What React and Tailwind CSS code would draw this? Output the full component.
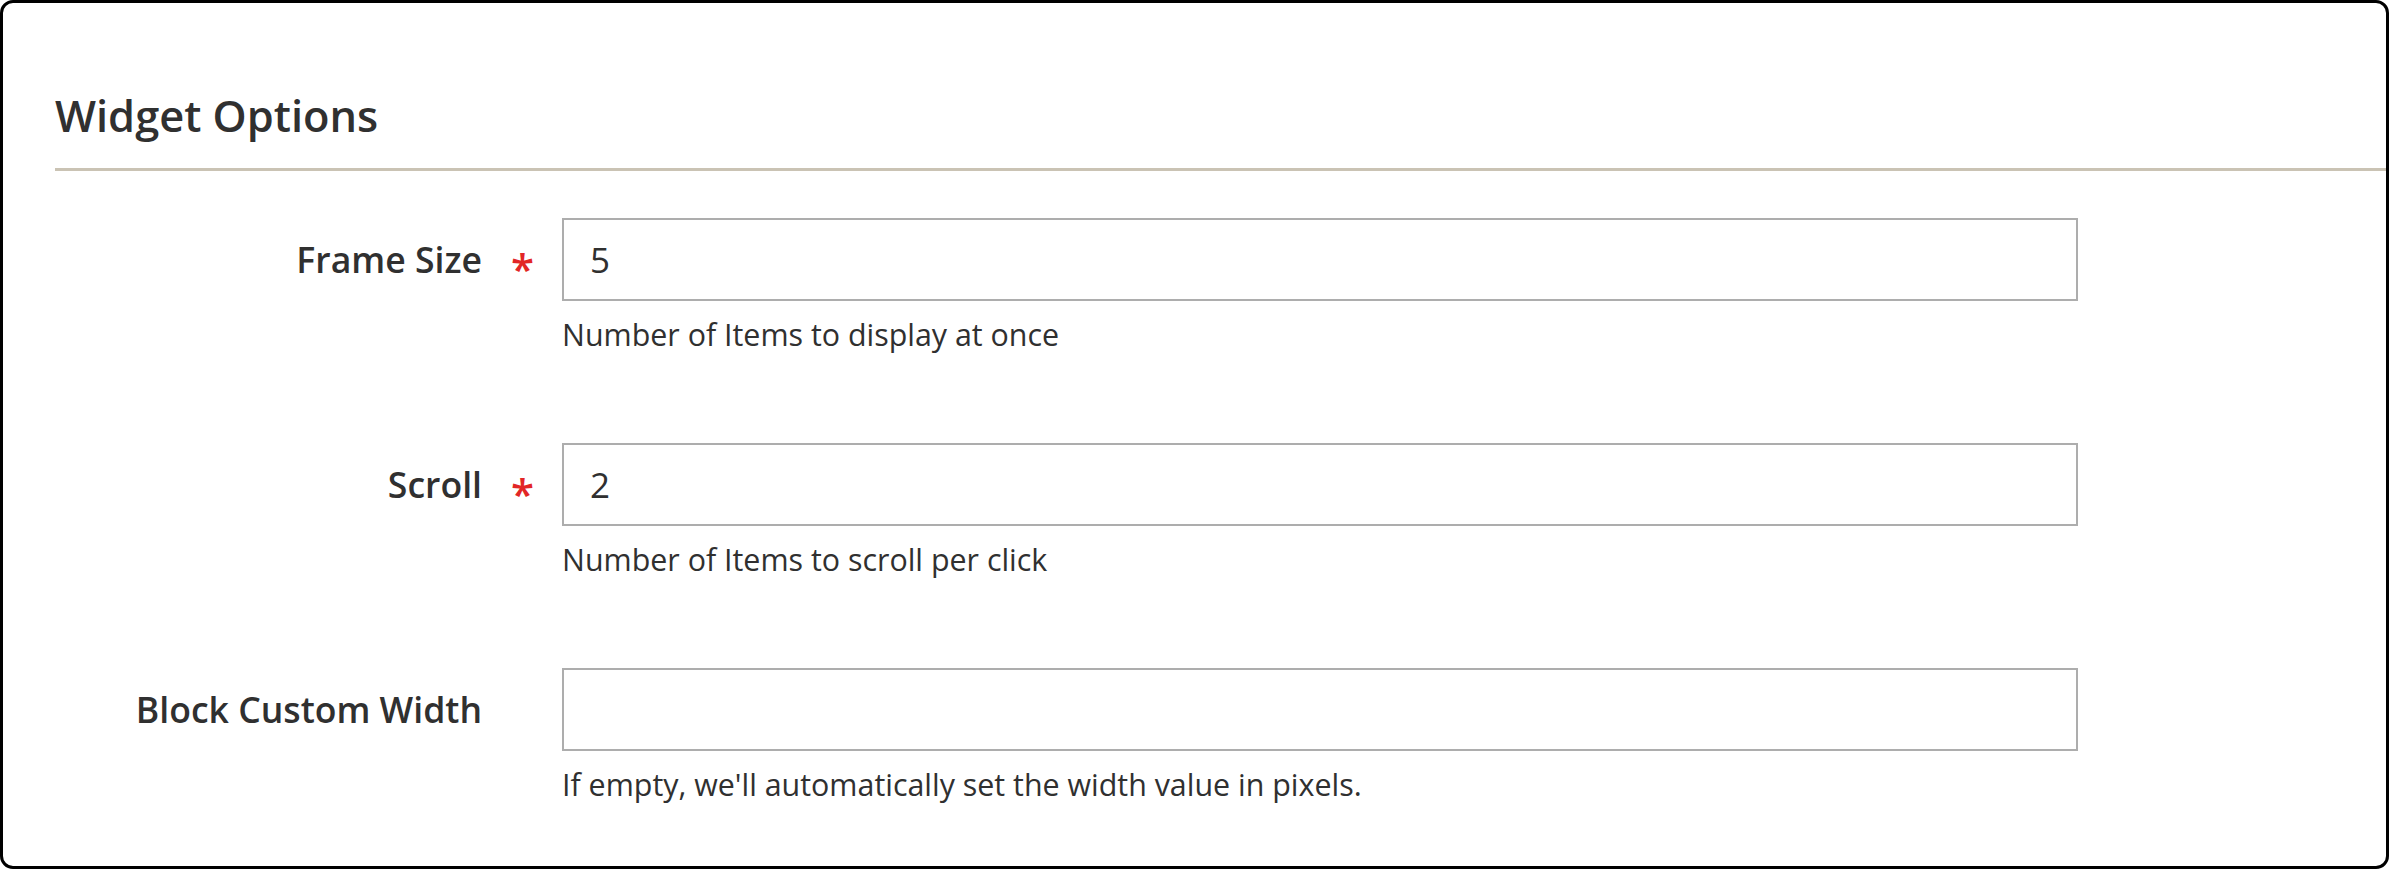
import React from "react";

function Row({ label, required, value, note, first }) {
  return (
    <div className={`flex items-start ${first ? "mt-[47px]" : "mt-[86px]"}`}>
      <div className="w-[479px] h-[83px] flex items-center justify-end text-[35.6px] font-semibold text-[#303030] leading-none">
        {label}
      </div>
      <div className="w-[80px] h-[83px] flex items-center pl-[29px]">
        {required && (
          <span className="text-[#e22626] text-[42px] font-semibold leading-none translate-y-[8px]">*</span>
        )}
      </div>
      <div className="w-[1516px]">
        <div className="h-[83px] border-2 border-[#adadad] bg-white flex items-center px-[26px] text-[35px] text-[#303030] leading-none">
          {value}
        </div>
        <div className="mt-[11px] text-[30.4px] leading-[45px] text-[#303030]">{note}</div>
      </div>
    </div>
  );
}

export default function App() {
  return (
    <div className="w-[2389px] h-[869px] bg-white font-['Open_Sans',sans-serif]">
      <div className="h-full border-[3px] border-black rounded-[13px] overflow-hidden">
        <h2 className="pt-[91px] pl-[52px] text-[43.4px] leading-[43px] font-semibold text-[#303030]">
          Widget Options
        </h2>
        <div className="mt-[31px] ml-[52px] h-[3px] bg-[#cac3b4]" />
        <Row first label="Frame Size" required value="5" note="Number of Items to display at once" />
        <Row label="Scroll" required value="2" note="Number of Items to scroll per click" />
        <Row label="Block Custom Width" value="" note="If empty, we'll automatically set the width value in pixels." />
      </div>
    </div>
  );
}
